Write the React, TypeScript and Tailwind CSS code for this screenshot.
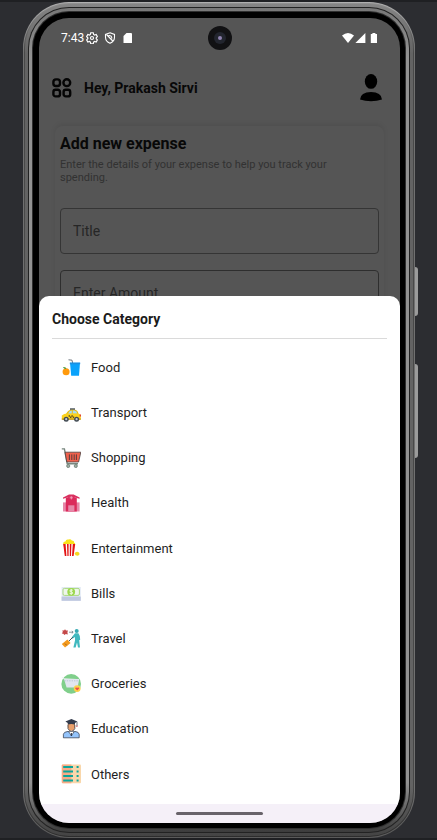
import type { ReactNode } from "react";

const categories: { name: string; icon: ReactNode }[] = [
  {
    name: "Food",
    icon: (
      <>
        <path d="M7.5 1.8 L11 2.2 L11.6 5" fill="none" stroke="#6b747c" strokeWidth="1" />
        <path d="M9 4.8 H19 L18 17.8 H10.2 Z" fill="#0aa2fb" />
        <path d="M8.8 4.6 H19.2 V6.2 H8.8 Z" fill="#1c8fe0" />
        <circle cx="5.1" cy="13.8" r="3.5" fill="#ff9a0c" />
        <path d="M2 9 Q5 8.6 5.4 10.8 Q3 11.4 2 9 Z" fill="#4f9a3c" />
      </>
    ),
  },
  {
    name: "Transport",
    icon: (
      <>
        <rect x="9" y="5.2" width="5" height="2.2" fill="#5e6870" />
        <path d="M5 11 Q7.4 6.8 10.4 6.8 H13.4 Q16.6 6.8 17.6 11 Z" fill="#e8bc12" />
        <path d="M6.8 10.8 Q8.4 7.6 10.8 7.6 V10.8 Z M11.8 7.6 H13.4 Q15.8 7.8 16.4 10.8 H11.8 Z" fill="#a9dcf2" />
        <path d="M0.8 12.6 Q3 10.4 6 10.4 H17 Q19.8 10.8 19.8 13 V16.4 H0.8 Z" fill="#fbd21b" />
        <path d="M7.6 12.2 H9 V13.6 H10.4 V12.2 H11.8 V13.6 H13.2 V15 H11.8 V13.8 H10.4 V15 H9 V13.8 H7.6 Z" fill="#5d4e1d" />
        <path d="M0.8 15.4 H19.8 V16.8 H0.8 Z" fill="#c99a15" />
        <path d="M18.6 11.6 H20 V13.6 H18.6 Z" fill="#e0402f" />
        <circle cx="5.2" cy="16.2" r="2.5" fill="#414a52" />
        <circle cx="15.6" cy="16.2" r="2.5" fill="#414a52" />
        <circle cx="5.2" cy="16.2" r="1.1" fill="#c5ccd0" />
        <circle cx="15.6" cy="16.2" r="1.1" fill="#c5ccd0" />
      </>
    ),
  },
  {
    name: "Shopping",
    icon: (
      <>
        <path d="M0.8 0.9 H3.4 L6.2 15.8 H17" fill="none" stroke="#78877f" strokeWidth="1.4" />
        <path d="M4 4.2 H19.8 L17.6 14 H5.8 Z" fill="#f0604c" stroke="#4b4140" strokeWidth="0.8" />
        <path d="M8.4 6.4 V12 M10.8 6.4 V12 M13.2 6.4 V12 M15.4 6.4 V12" stroke="#5a3d3c" strokeWidth="1" />
        <circle cx="7.2" cy="18" r="1.6" fill="#9caea2" stroke="#56645c" strokeWidth="0.6" />
        <circle cx="14.8" cy="18" r="1.6" fill="#9caea2" stroke="#56645c" strokeWidth="0.6" />
      </>
    ),
  },
  {
    name: "Health",
    icon: (
      <>
        <path d="M2 9.4 H18.6 V18.5 H2 Z" fill="#e688a9" />
        <path d="M4.8 5 L10.3 3 L15.8 5 V18.5 H4.8 Z" fill="#db2a5b" />
        <path d="M2 4.4 L8 1.6 H12.6 L18.6 4.4 V5.8 L10.3 3.6 L2 5.8 Z" fill="#d9305f" />
        <path d="M10.3 3.2 V6.4 M8.7 4.8 H11.9" stroke="#f4b3c8" strokeWidth="0.8" />
        <path d="M7.2 12.3 H13.4 V18.5 H7.2 Z" fill="#e688a9" />
      </>
    ),
  },
  {
    name: "Entertainment",
    icon: (
      <>
        <path d="M2.2 6.4 Q1.8 3.6 4.4 3.4 Q5 1 7.4 1.6 Q9.6 0.4 10.8 2.6 Q13.4 2.6 13 4.6 Q14.6 5 14 6.8 Z" fill="#f9e21b" />
        <path d="M2.2 6 H14.2 L12.6 18 H3.8 Z" fill="#e31313" />
        <path d="M4.6 6 H6 L6.4 18 H5.4 Z M7.6 6 H8.8 V18 H7.6 Z M10.4 6 H11.8 L11 18 H10 Z" fill="#ffffff" />
        <path d="M13.6 15.2 Q16 12.8 18 14.6 Q19.4 16.8 17 17.8 Q14 18 13.6 15.2 Z" fill="#f5d820" />
      </>
    ),
  },
  {
    name: "Bills",
    icon: (
      <>
        <rect x="0.6" y="3" width="19.2" height="13.8" fill="#e3eaf5" />
        <rect x="0.6" y="12.6" width="19.2" height="4.2" fill="#bfc8df" />
        <rect x="2" y="4.4" width="16.4" height="7" rx="1.4" fill="#eef6ea" stroke="#abd97e" strokeWidth="1" />
        <circle cx="10.2" cy="7.8" r="3.9" fill="#9cd84e" />
        <path d="M11.8 6.2 Q8.6 5.2 8.8 7 Q9.2 8 10.4 7.9 Q12 8.2 11.6 9.4 Q10.4 10.4 8.6 9.4 M10.2 4.9 V10.8" fill="none" stroke="#ffffff" strokeWidth="0.8" />
      </>
    ),
  },
  {
    name: "Travel",
    icon: (
      <>
        <path d="M4 0.2 L5 1.4 L7 1.4 L6.4 3.2 L6.8 5.4 L4.8 5 L3.4 6 L2.4 4.8 L0.8 4.4 L1.8 3 L1.4 1.2 L3 1.6 Z" fill="#c44848" />
        <path d="M8 3.2 H12 M10.8 2 L12.2 3.2 L10.8 4.4" fill="none" stroke="#6a7c84" strokeWidth="0.8" />
        <circle cx="15.7" cy="2.1" r="2" fill="#36a9b2" />
        <path d="M14 4.2 H17.4 Q19.6 7 19.2 10.8 L18.2 11.2 L19 18.6 H17 L16 13.4 L14.6 18.6 H12.4 L14 11.6 V8 L11.4 9.8 L10.6 8.6 Z" fill="#41b9bf" />
        <path d="M11.8 8.2 L7.4 12.6" stroke="#47545b" strokeWidth="1" />
        <path d="M0.8 15 L6.4 10.6 L9.6 14 L4 18.6 Z" fill="#f49a1d" />
        <path d="M4 14.6 L5.8 16.4" stroke="#80511e" strokeWidth="0.8" />
      </>
    ),
  },
  {
    name: "Groceries",
    icon: (
      <>
        <circle cx="10.2" cy="9.9" r="9.8" fill="#80cf8b" />
        <path d="M0.8 3 L2.6 4.8 L17.8 5.6" fill="none" stroke="#eef1f6" strokeWidth="1" />
        <path d="M3 5 H18.2 L16.6 13.6 H5.6 Z" fill="#e1e6ef" />
        <path d="M3.4 6.8 H18" stroke="#b3bfd0" strokeWidth="0.8" strokeDasharray="1.4 1" />
        <circle cx="16.2" cy="14.6" r="3.4" fill="#fdd14b" />
        <path d="M16.2 16.6 L14.2 14.4 Q14.2 12.8 16.2 13.8 Q18.2 12.8 18.2 14.4 Z" fill="#ee4c4a" />
      </>
    ),
  },
  {
    name: "Education",
    icon: (
      <>
        <path d="M6.8 4 H14 V8 Q13.6 11.6 10.4 11.8 Q7.2 11.6 6.8 8 Z" fill="#eaa06c" />
        <path d="M7 6 V9.6 Q8.6 12.4 10.4 12.4 Q12.4 12.4 13.8 9.6 V6" fill="none" stroke="#37373f" strokeWidth="0.8" />
        <path d="M4.4 2.6 L10.4 0 L16.4 2.6 L14 4 V5.8 Q10.4 4.4 6.8 5.8 V4 Z" fill="#333b4c" />
        <path d="M16 2.8 V7" stroke="#333b4c" strokeWidth="0.7" />
        <circle cx="15.9" cy="7.2" r="0.7" fill="#c74d54" />
        <path d="M2.4 18.8 V15.2 Q2.8 12.8 7 12.4 L10.4 14.6 L14 12.4 Q17.8 12.8 18.2 15.2 V18.8 Z" fill="#94c4fb" stroke="#293245" strokeWidth="0.7" />
        <path d="M7.6 12.4 L10.4 17 L13.2 12.4 Z" fill="#ffffff" stroke="#293245" strokeWidth="0.6" />
        <path d="M10.4 14 V17" stroke="#293245" strokeWidth="1" />
      </>
    ),
  },
  {
    name: "Others",
    icon: (
      <>
        <rect x="0.8" y="0.4" width="19.2" height="18.8" rx="1" fill="#f9d7ab" />
        <path d="M1.8 0.4 H10.4 V19.2 H1.8 Q0.8 19.2 0.8 18.2 V1.4 Q0.8 0.4 1.8 0.4 Z" fill="#f7ab86" />
        <path d="M2.2 3 H12 M2.2 7.5 H12 M2.2 12 H12 M2.2 16.5 H12" stroke="#0ca69b" strokeWidth="1.8" />
        <path d="M15.6 3 H17.6 M15.6 7.5 H17.6 M15.6 12 H17.6 M15.6 16.5 H17.6" stroke="#0ca69b" strokeWidth="1.8" />
      </>
    ),
  },
];

function StatusBar() {
  return (
    <div className="flex h-10 items-center pr-[22px] pl-[22px] text-white">
      <span className="text-xs">7:43</span>
      <svg className="ml-0.5 size-3" viewBox="0 0 24 24" fill="none" stroke="currentColor" strokeWidth="2.4" aria-hidden="true">
        <path d="M9.5 1.5 h5 l0.7 3.3 2 1.2 3.2-1 2.4 4.2-2.4 2.3v2l2.4 2.3-2.4 4.2-3.2-1-2 1.2-0.7 3.3h-5l-0.7-3.3-2-1.2-3.2 1-2.4-4.2 2.4-2.3v-2L1.2 9.2l2.4-4.2 3.2 1 2-1.2z" />
        <circle cx="12" cy="12" r="3" />
      </svg>
      <svg className="ml-1.5 size-3" viewBox="0 0 24 24" fill="none" stroke="currentColor" strokeWidth="2.2" aria-hidden="true">
        <path d="M12 1.6 L21 5 V11 Q20.6 19 12 22.6 Q3.4 19 3 11 V5 Z" />
        <path d="M5 5 L17.6 18 M9 7 Q16 6.4 15.6 13" />
      </svg>
      <svg className="ml-1.5 size-3" viewBox="0 0 24 24" fill="currentColor" aria-hidden="true">
        <path d="M9 2 H18 Q20 2 20 4 V22 H3 V8 Z" />
      </svg>
      <span className="flex-1" />
      <svg className="h-3 w-9" viewBox="0 0 36 12" fill="currentColor" aria-hidden="true">
        <path d="M0 3.6 Q6 -1.6 12 3.6 L6 11 Z" />
        <path d="M23.4 1 V11 H13.4 Z" />
        <path d="M30.4 1 H33.4 V2 H35 V11 H28.8 V2 H30.4 Z" />
      </svg>
    </div>
  );
}

function Header() {
  return (
    <header className="flex h-15 items-center px-[13px]">
      <button type="button" aria-label="Menu">
        <svg className="size-5" viewBox="0 0 20 20" fill="none" stroke="#050505" strokeWidth="2.4" aria-hidden="true">
          <rect x="1.4" y="1.4" width="6.6" height="6.6" rx="2.6" />
          <circle cx="14.8" cy="4.7" r="3.4" />
          <rect x="1.4" y="11.8" width="6.6" height="6.6" rx="2.2" />
          <rect x="11.6" y="11.8" width="6.6" height="6.6" rx="2.2" />
        </svg>
      </button>
      <h1 className="ml-3 flex-1 text-sm font-bold text-[#080808]">Hey, Prakash Sirvi</h1>
      <button type="button" aria-label="Profile" className="mr-1">
        <svg className="h-7 w-6" viewBox="0 0 24 28" fill="#000000" aria-hidden="true">
          <ellipse cx="12" cy="7.4" rx="6.2" ry="7.4" />
          <path d="M1 25.4 Q1.6 18.2 12 18 Q22.4 18.2 23 25.4 Q18 27.2 12 27.2 Q6 27.2 1 25.4 Z" />
        </svg>
      </button>
    </header>
  );
}

function ExpenseForm() {
  return (
    <form className="mx-4 mt-2 rounded-t-lg px-[5px] pt-2 shadow-[0_-2px_5px_rgba(0,0,0,0.08)]">
      <h2 className="text-base leading-5 font-bold text-[#080808]">Add new expense</h2>
      <p className="mt-1 pr-8 text-[11px] leading-[13px] text-[#323232]">
        Enter the details of your expense to help you track your spending.
      </p>
      <input
        type="text"
        aria-label="Title"
        placeholder="Title"
        className="mt-6 block h-[46px] w-full rounded-sm border border-[#353535] bg-transparent px-3 text-sm placeholder:text-[#262626]"
      />
      <input
        type="text"
        aria-label="Enter Amount"
        placeholder="Enter Amount"
        className="mt-4 block h-[46px] w-full rounded-sm border border-[#2e2e2e] bg-transparent px-3 text-sm placeholder:text-[#262626]"
      />
    </form>
  );
}

function CategorySheet() {
  return (
    <section aria-labelledby="sheet-title" className="rounded-t-[10px] bg-white px-3 pt-[13px] pb-[7px]">
      <h2 id="sheet-title" className="mx-px border-b border-[#dadada] pb-[9px] text-sm font-bold text-[#1b1b1b]">
        Choose Category
      </h2>
      <ul className="mt-[6px] grid h-[452px] auto-rows-fr">
        {categories.map((category) => (
          <li key={category.name} className="flex">
            <button type="button" className="flex w-full items-center gap-[10px] px-[10px] text-left text-[13px] text-[#1f1f1f]">
              <svg className="size-5" viewBox="0 0 20 20" aria-hidden="true">
                {category.icon}
              </svg>
              {category.name}
            </button>
          </li>
        ))}
      </ul>
    </section>
  );
}

function PhoneFrame({ children }: { children: ReactNode }) {
  return (
    <div className="relative rounded-[46px] bg-[linear-gradient(#b0b0b0,#707070_6%,#707070_94%,#5a5a5a)] p-px">
      <span className="absolute top-[265px] -right-[3px] h-[49px] w-[3px] rounded-r-sm bg-[#9b9b9b]" />
      <span className="absolute top-[362px] -right-[3px] h-[94px] w-[3px] rounded-r-sm bg-[#9b9b9b]" />
      <div className="rounded-[45px] bg-[linear-gradient(#909090,#484848_6%,#484848_94%,#2c2c2c)] p-px">
        <div className="rounded-[44px] bg-[linear-gradient(#858585,#636363_6%,#636363_94%,#444444)] p-[3px]">
          <div className="rounded-[41px] bg-[#222222] p-px">
            <div className="rounded-[40px] bg-[linear-gradient(#777777,#929292_6%,#929292_94%,#3c3c3c)] p-[3px]">
              <div className="rounded-[37px] bg-[#2f2f2f] p-px">
                <div className="rounded-[36px] bg-black pt-[6px] pr-[5px] pb-[5px] pl-[6px]">{children}</div>
              </div>
            </div>
          </div>
        </div>
      </div>
    </div>
  );
}

export default function App() {
  return (
    <div className="min-h-screen border-y-2 border-[#1f2023] bg-[#2c2d31] pr-[22px] pl-[23px] font-['Roboto','Noto_Sans',sans-serif]">
      <PhoneFrame>
        <div className="relative overflow-hidden rounded-[30px] bg-[#555555]">
          <span className="absolute top-2 left-1/2 flex size-6 -translate-x-1/2 items-center justify-center rounded-full bg-[#111113]">
            <span className="flex size-3 items-center justify-center rounded-full bg-[#22252e]">
              <span className="size-1 rounded-full bg-[#8f84b0]" />
            </span>
          </span>
          <div className="h-[278px] overflow-hidden">
            <StatusBar />
            <Header />
            <ExpenseForm />
          </div>
          <CategorySheet />
          <div className="flex h-[19px] items-center justify-center bg-[#f5f0f8]">
            <span className="h-[3px] w-[87px] rounded-full bg-[#68636a]" />
          </div>
        </div>
      </PhoneFrame>
    </div>
  );
}
